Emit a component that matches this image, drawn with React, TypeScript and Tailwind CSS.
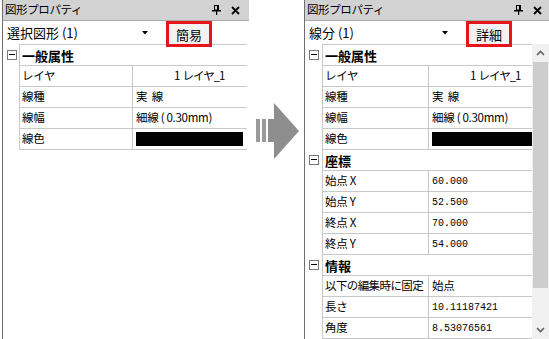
import type { ReactNode } from "react";

type Row = { label: string; value: ReactNode; mono?: boolean; pad?: string; tight?: boolean };
type Section = { title: string; rows: Row[] };

const mono = "font-['Liberation_Mono',monospace] text-[10px]";

function PinIcon() {
  return (
    <svg width="9" height="10" viewBox="0 0 9 10" className="block">
      <rect x="2.5" y="0.5" width="4" height="4.5" fill="none" stroke="#000" />
      <rect x="5" y="1" width="1.5" height="4" fill="#000" />
      <rect x="0" y="5" width="9" height="1.5" fill="#000" />
      <rect x="4" y="6" width="1.2" height="4" fill="#000" />
    </svg>
  );
}

function CloseIcon() {
  return (
    <svg width="9" height="9" viewBox="0 0 9 9" className="block">
      <path d="M1 1 L8 8 M8 1 L1 8" stroke="#000" strokeWidth="1.8" />
    </svg>
  );
}

function Collapse() {
  return (
    <div className="relative w-[10px] h-[10px] border border-[#7a7a7a] bg-white">
      <div className="absolute left-[1px] right-[1px] top-[3.5px] h-px bg-black" />
    </div>
  );
}

function Chevron({ up }: { up?: boolean }) {
  return (
    <svg width="9" height="6" viewBox="0 0 9 6" className="block">
      <path d={up ? "M1 5 L4.5 1.5 L8 5" : "M1 1 L4.5 4.5 L8 1"} fill="none" stroke="#606060" strokeWidth="1.6" />
    </svg>
  );
}

function DropArrow() {
  return (
    <svg width="6" height="4" viewBox="0 0 6 4" className="block">
      <path d="M0 0 H6 L3 3.5 Z" fill="#000" />
    </svg>
  );
}

function PropertyPanel({
  combo,
  button,
  fieldW,
  gutter,
  tableW,
  labelW,
  sections,
  scroll,
  iconGap,
}: {
  combo: string;
  button: string;
  fieldW: string;
  gutter: string;
  tableW: string;
  labelW: string;
  sections: Section[];
  scroll?: boolean;
  iconGap: string;
}) {
  return (
    <div className="flex flex-col h-full border-l border-[#6e6e6e] bg-white">
      <div className="h-[21px] flex items-center bg-[#d2d2d2] border-b border-[#a8a8a8] pl-[2px]">
        <span className="text-[11.5px] leading-none tracking-[-0.4px]">図形プロパティ</span>
        <div className={`ml-auto flex items-center gap-[10px] ${iconGap}`}>
          <PinIcon />
          <CloseIcon />
        </div>
      </div>
      <div className="h-[23px] flex items-start">
        <div className={`${fieldW} h-full flex items-center bg-white pl-[4px] pr-[7px]`}>
          <span className="text-[13px] leading-none">{combo}</span>
          <span className="ml-auto">
            <DropArrow />
          </span>
        </div>
        <div className="relative z-10 ml-[11px] w-[46px] h-[26px] border-[3px] border-[#e8141c] bg-[#f2f2f2] flex items-center justify-center">
          <span className="text-[13px] leading-none">{button}</span>
        </div>
      </div>
      <div className="flex flex-1 min-h-0">
        <div className="flex flex-col">
          {sections.map((s) => (
            <div key={s.title} className="flex flex-col">
              <div className="flex h-[21px]">
                <div className={`${gutter} flex items-center justify-center pl-[1px]`}>
                  <Collapse />
                </div>
                <div className={`${tableW} border-l border-t border-[#c8c8c8] flex items-center pl-[2px]`}>
                  <span className="text-[13px] font-bold leading-none">{s.title}</span>
                </div>
              </div>
              {s.rows.map((r) => (
                <div key={r.label} className="flex h-[21px]">
                  <div className={gutter} />
                  <div className={`${tableW} flex border-l border-t border-[#c8c8c8]`}>
                    <div className={`${labelW} shrink-0 border-r border-[#c8c8c8] flex items-center pl-[2px]`}>
                      <span
                        className={`text-[11.5px] leading-none whitespace-nowrap ${
                          r.tight ? "tracking-[-0.6px]" : "tracking-[-0.3px]"
                        }`}
                      >
                        {r.label}
                      </span>
                    </div>
                    <div className={`flex-1 flex items-center ${r.pad ?? "pl-[3px]"}`}>
                      {typeof r.value === "string" ? (
                        <span
                          className={
                            r.mono
                              ? mono
                              : `text-[11.5px] leading-none whitespace-pre ${
                                  r.pad ? "tracking-[-1px]" : "tracking-[-0.3px]"
                                }`
                          }
                        >
                          {r.value}
                        </span>
                      ) : (
                        r.value
                      )}
                    </div>
                  </div>
                </div>
              ))}
            </div>
          ))}
          <div className={`${tableW} ml-auto border-t border-[#c8c8c8]`} />
        </div>
        {scroll && (
          <div className="w-[17px] ml-auto flex flex-col bg-[#f0f0f0]">
            <div className="h-[18px] flex items-center justify-center">
              <Chevron up />
            </div>
            <div className="h-[226px] mx-[1px] bg-[#cdcdcd]" />
            <div className="flex-1 flex items-end justify-center pb-[6px]">
              <Chevron />
            </div>
          </div>
        )}
      </div>
    </div>
  );
}

const black = (w: string) => <div className={`${w} h-[14px] bg-black`} />;

const general = (w: string): Section => ({
  title: "一般属性",
  rows: [
    { label: "レイヤ", value: "1  レイヤ_1", pad: "pl-[41px]" },
    { label: "線種", value: "実  線" },
    { label: "線幅", value: "細線 ( 0.30mm)" },
    { label: "線色", value: black(w) },
  ],
});

function ArrowGraphic() {
  return (
    <svg width="44" height="58" viewBox="0 0 44 58" className="block">
      <rect x="0" y="16" width="4" height="23" fill="#9a9a9a" />
      <rect x="6" y="16" width="4" height="23" fill="#9a9a9a" />
      <path d="M12 16 H18 V0 L43 28 L18 56 V39 H12 Z" fill="#8e8e8e" />
    </svg>
  );
}

export default function App() {
  return (
    <div className="w-[549px] h-[339px] bg-white flex overflow-hidden font-['Noto_Sans_CJK_JP',sans-serif] text-black">
      <div className="w-[249px] h-full pl-[2px] shrink-0">
        <PropertyPanel
          combo="選択図形 (1)"
          button="簡易"
          fieldW="w-[152px]"
          gutter="w-[16px]"
          tableW="w-[228px]"
          labelW="w-[113px]"
          iconGap="pr-[9px]"
          sections={[general("w-[107px]")]}
        />
      </div>
      <div className="w-[55px] shrink-0 flex justify-center pt-[103px] pl-[2px]">
        <ArrowGraphic />
      </div>
      <div className="flex-1 h-full">
        <PropertyPanel
          combo="線分 (1)"
          button="詳細"
          fieldW="w-[150px]"
          gutter="w-[17px]"
          tableW="w-[210px]"
          labelW="w-[106px]"
          iconGap="pr-[7px]"
          scroll
          sections={[
            general("w-[100px]"),
            {
              title: "座標",
              rows: [
                { label: "始点 X", value: "60.000", mono: true },
                { label: "始点 Y", value: "52.500", mono: true },
                { label: "終点 X", value: "70.000", mono: true },
                { label: "終点 Y", value: "54.000", mono: true },
              ],
            },
            {
              title: "情報",
              rows: [
                { label: "以下の編集時に固定", value: "始点", tight: true },
                { label: "長さ", value: "10.11187421", mono: true },
                { label: "角度", value: "8.53076561", mono: true },
              ],
            },
          ]}
        />
      </div>
    </div>
  );
}
